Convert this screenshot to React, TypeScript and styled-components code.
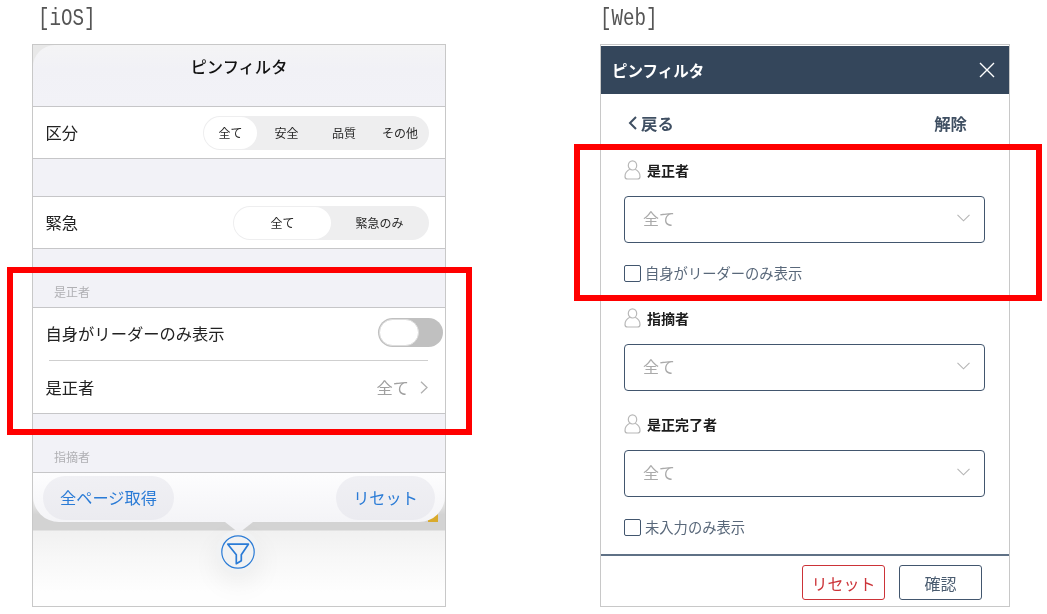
import styled, { createGlobalStyle } from 'styled-components';

const GlobalStyle = createGlobalStyle`
  html, body {
    margin: 0;
    background: #fff;
    font-family: "Noto Sans CJK JP", "Noto Sans", sans-serif;
  }
`;

const Page = styled.div`
  position: relative;
  width: 1047px;
  height: 614px;
  overflow: hidden;
  display: flex;
`;

const Column = styled.div<{ $left: number; $width: number }>`
  margin-left: ${(p) => p.$left}px;
  width: ${(p) => p.$width}px;
  display: flex;
  flex-direction: column;
`;

const Platform = styled.div<{ $indent: number }>`
  height: 44px;
  margin-left: ${(p) => p.$indent}px;
  font-family: "Liberation Mono", monospace;
  font-size: 24px;
  line-height: 37px;
  color: #555;
  transform: scaleX(0.8);
  transform-origin: left top;
  filter: blur(0.3px);
`;

const Frame = styled.div`
  height: 563px;
  box-sizing: border-box;
  border: 1px solid #c8c8c8;
  display: flex;
  flex-direction: column;
  overflow: hidden;
  background: #fff;
  filter: blur(0.35px);
`;

/* iOS */
const IosFrame = styled(Frame)`
  position: relative;
  background: #e8e8e8;
`;

const IosTitle = styled.div`
  height: 61px;
  box-sizing: border-box;
  padding-top: 8px;
  border-radius: 22px 0 0 0;
  background: linear-gradient(#f4f4f5, #f1f1f6 40%, #f2f2f7);
  text-align: center;
  font-size: 16.3px;
  font-weight: 500;
  line-height: 26px;
  color: #111;
`;

const IosGroup = styled.div`
  background: #fff;
  border-top: 1px solid #c6c6c8;
  border-bottom: 1px solid #c6c6c8;
`;

const IosRow = styled.div<{ $height?: number }>`
  height: ${(p) => p.$height ?? 51}px;
  box-sizing: border-box;
  padding: 0 16px 0 12.5px;
  display: flex;
  align-items: center;
  justify-content: space-between;
  font-size: 16.3px;
  color: #222;
`;

const IosLabel = styled.span`
  margin-top: -2px;
`;

const IosRule = styled.div`
  height: 1px;
  margin: 0 17px 0 16px;
  background: #cfcfcf;
`;

const IosSpacer = styled.div<{ $height: number }>`
  height: ${(p) => p.$height}px;
  box-sizing: border-box;
  padding: ${(p) => p.$height - 24}px 0 0 21px;
  background: #f2f2f7;
  font-size: 12px;
  line-height: 18px;
  color: #b0b0b4;
`;

const Segments = styled.div<{ $width: number }>`
  width: ${(p) => p.$width}px;
  height: 34px;
  box-sizing: border-box;
  padding: 1px;
  border-radius: 17px;
  background: #eeeeef;
  display: flex;
`;

const Segment = styled.div<{ $active?: boolean; $grow: number }>`
  flex: ${(p) => p.$grow} 0 0;
  display: flex;
  align-items: center;
  justify-content: center;
  border-radius: 16px;
  font-size: 12px;
  color: #2a2a2a;
  background: ${(p) => (p.$active ? '#fff' : 'transparent')};
`;

const Toggle = styled.div`
  width: 65px;
  height: 29px;
  margin: -3px -14px 0 0;
  box-sizing: border-box;
  padding: 1px;
  border-radius: 15px;
  background: #c0c0c0;
`;

const ToggleKnob = styled.div`
  width: 40px;
  height: 27px;
  box-sizing: border-box;
  border: 1px solid #ddd;
  border-radius: 14px;
  background: #fff;
`;

const IosValue = styled.span`
  display: flex;
  align-items: center;
  gap: 11px;
  margin-right: 1px;
  color: #a0a0a0;
`;

const IosDock = styled.div`
  position: relative;
  height: 49px;
  flex: none;
  border-top: 1px solid #c6c6c8;
  background: linear-gradient(#f6f6f6 40%, #d3d3d3 85%);
`;

const CornerMark = styled.div`
  position: absolute;
  right: 7px;
  bottom: 0;
  width: 10px;
  height: 12px;
  background: #d9aa2c;
`;

const IosToolbar = styled.div`
  position: relative;
  height: 49px;
  box-sizing: border-box;
  padding: 3px 10px 0;
  display: flex;
  justify-content: space-between;
  border-radius: 0 0 26px 26px;
  background: linear-gradient(#fdfdfe, #f4f4f7);
`;

const ToolButton = styled.div<{ $width: number }>`
  width: ${(p) => p.$width}px;
  height: 44px;
  box-sizing: border-box;
  padding-bottom: 2px;
  display: flex;
  align-items: center;
  justify-content: center;
  border-radius: 22px;
  background: linear-gradient(#f0f0f4, #ebebf0);
  font-size: 16.2px;
  color: #2a7bd6;
`;

const IosBackdrop = styled.div`
  flex: 1;
  background: linear-gradient(#d3d3d3 0, #d3d3d3 8px, #f1f1f1 9px, #f7f7f7 35px, #fefefe 70px);
`;

const FilterTail = styled.div`
  position: absolute;
  left: 192px;
  top: 477px;
  width: 0;
  height: 0;
  border-left: 14px solid transparent;
  border-right: 14px solid transparent;
  border-top: 11px solid #f3f3f6;
`;

const FilterButton = styled.div`
  position: absolute;
  left: 183px;
  top: 485px;
  width: 44px;
  height: 44px;
  border-radius: 50%;
  background: #f1f2f3;
  box-shadow: 0 10px 28px rgba(0, 0, 0, 0.06);
  display: flex;
  align-items: center;
  justify-content: center;
`;

/* Web */
const WebHeader = styled.div`
  height: 48px;
  margin: 1px 0 0;
  flex: none;
  box-sizing: border-box;
  padding: 0 14px 0 11px;
  display: flex;
  align-items: center;
  justify-content: space-between;
  background: #34465b;
  font-size: 15.5px;
  font-weight: 700;
  color: #fff;
`;

const WebBody = styled.div`
  flex: 1;
  padding: 0 24px 0 23px;
`;

const BackRow = styled.div`
  height: 66px;
  box-sizing: border-box;
  padding: 0 18px 9px 4px;
  display: flex;
  align-items: center;
  justify-content: space-between;
  font-size: 16.4px;
  font-weight: 700;
  color: #3f4f62;
`;

const BackLink = styled.span`
  display: flex;
  align-items: center;
  gap: 4px;
`;

const Section = styled.div<{ $gap?: number }>`
  margin-bottom: ${(p) => p.$gap ?? 23}px;
`;

const SectionHead = styled.div`
  height: 20px;
  margin-bottom: 16px;
  display: flex;
  align-items: center;
  gap: 6px;
  font-size: 14px;
  font-weight: 700;
  color: #1c1c1c;
`;

const Select = styled.div`
  height: 47px;
  box-sizing: border-box;
  padding: 0 14px 3px 18px;
  display: flex;
  align-items: center;
  justify-content: space-between;
  border: 1px solid #42566e;
  border-radius: 4px;
  font-size: 16px;
  color: #aaa;
`;

const CheckRow = styled.label`
  height: 17px;
  margin-top: 22px;
  display: flex;
  align-items: center;
  gap: 4px;
  font-size: 14.3px;
  color: #59687a;
`;

const CheckText = styled.span`
  margin-top: -3px;
`;

const CheckBox = styled.span`
  width: 17px;
  height: 17px;
  box-sizing: border-box;
  border: 1.5px solid #42566e;
  border-radius: 2px;
`;

const WebFooter = styled.div`
  height: 52px;
  flex: none;
  box-sizing: border-box;
  padding: 9px 27px 0 0;
  display: flex;
  justify-content: flex-end;
  gap: 14px;
  border-top: 2px solid #5f7186;
`;

const FooterButton = styled.div<{ $danger?: boolean }>`
  width: 83px;
  height: 35px;
  box-sizing: border-box;
  display: flex;
  align-items: center;
  justify-content: center;
  border: 1px solid ${(p) => (p.$danger ? '#cc3338' : '#42566e')};
  border-radius: 3px;
  font-size: 16px;
  color: ${(p) => (p.$danger ? '#cc3338' : '#4a5c70')};
`;

/* red annotations lie over the screenshots */
const Callout = styled.div`
  position: absolute;
  box-sizing: border-box;
  border: 6px solid #ff0000;
`;

const IosCallout = styled(Callout)`
  left: 7px;
  top: 267px;
  width: 465px;
  height: 168px;
`;

const WebCallout = styled(Callout)`
  left: 574px;
  top: 144px;
  width: 468px;
  height: 157px;
`;

const UserIcon = () => (
  <svg width="17" height="20" viewBox="0 0 17 20" fill="none" stroke="#b8b8b8" strokeWidth="1.2">
    <ellipse cx="8.5" cy="5.4" rx="4.2" ry="4.6" />
    <path d="M5.8 9.2C2.8 10.6 1 13.4 1 16.4 1 18 2 19 3.6 19h9.8c1.6 0 2.6-1 2.6-2.6 0-3-1.8-5.8-4.8-7.2" />
  </svg>
);

const FunnelIcon = () => (
  <svg width="34" height="34" viewBox="0 0 34 34" fill="none" stroke="#2a7bd6">
    <circle cx="17" cy="17" r="16.2" strokeWidth="1.2" />
    <path d="M6.8 9.2h20.6l-7.1 10.5v6l-5 3v-9z" strokeWidth="1.7" strokeLinejoin="round" />
  </svg>
);

const CloseIcon = () => (
  <svg width="16" height="16" viewBox="0 0 16 16" fill="none" stroke="#fff" strokeWidth="1.4">
    <path d="M1 1l14 14M15 1L1 15" />
  </svg>
);

const ChevronDown = () => (
  <svg width="13" height="8" viewBox="0 0 13 8" fill="none" stroke="#b5b5b5" strokeWidth="1.1">
    <path d="M.5.8l6 6 6-6" />
  </svg>
);

const ChevronRight = () => (
  <svg width="8" height="13" viewBox="0 0 8 13" fill="none" stroke="#b0b0b0" strokeWidth="1.3">
    <path d="M1 .8l6 5.7-6 5.7" />
  </svg>
);

const ChevronLeft = () => (
  <svg width="9" height="14" viewBox="0 0 9 14" fill="none" stroke="#3f4f62" strokeWidth="2">
    <path d="M8 1L2 7l6 6" />
  </svg>
);

const WebSection = ({ label }: { label: string }) => (
  <>
    <SectionHead>
      <UserIcon />
      {label}
    </SectionHead>
    <Select>
      全て
      <ChevronDown />
    </Select>
  </>
);

export default function App() {
  return (
    <Page>
      <GlobalStyle />
      <Column $left={32} $width={414}>
        <Platform $indent={6}>[iOS]</Platform>
        <IosFrame>
          <IosTitle>ピンフィルタ</IosTitle>
          <IosGroup>
            <IosRow>
              <IosLabel>区分</IosLabel>
              <Segments $width={226}>
                <Segment $active $grow={53}>全て</Segment>
                <Segment $grow={59}>安全</Segment>
                <Segment $grow={56}>品質</Segment>
                <Segment $grow={56}>その他</Segment>
              </Segments>
            </IosRow>
          </IosGroup>
          <IosSpacer $height={37} />
          <IosGroup>
            <IosRow>
              <IosLabel>緊急</IosLabel>
              <Segments $width={196}>
                <Segment $active $grow={1}>全て</Segment>
                <Segment $grow={1}>緊急のみ</Segment>
              </Segments>
            </IosRow>
          </IosGroup>
          <IosSpacer $height={58}>是正者</IosSpacer>
          <IosGroup>
            <IosRow $height={52}>
              <IosLabel>自身がリーダーのみ表示</IosLabel>
              <Toggle>
                <ToggleKnob />
              </Toggle>
            </IosRow>
            <IosRule />
            <IosRow $height={52}>
              <span>是正者</span>
              <IosValue>
                全て
                <ChevronRight />
              </IosValue>
            </IosRow>
          </IosGroup>
          <IosSpacer $height={58}>指摘者</IosSpacer>
          <IosDock>
            <CornerMark />
            <IosToolbar>
              <ToolButton $width={131}>全ページ取得</ToolButton>
              <ToolButton $width={99}>リセット</ToolButton>
            </IosToolbar>
          </IosDock>
          <IosBackdrop />
          <FilterTail />
          <FilterButton>
            <FunnelIcon />
          </FilterButton>
        </IosFrame>
      </Column>
      <Column $left={154} $width={410}>
        <Platform $indent={0}>[Web]</Platform>
        <Frame>
          <WebHeader>
            ピンフィルタ
            <CloseIcon />
          </WebHeader>
          <WebBody>
            <BackRow>
              <BackLink>
                <ChevronLeft />
                戻る
              </BackLink>
              解除
            </BackRow>
            <Section $gap={26}>
              <WebSection label="是正者" />
              <CheckRow>
                <CheckBox />
                <CheckText>自身がリーダーのみ表示</CheckText>
              </CheckRow>
            </Section>
            <Section>
              <WebSection label="指摘者" />
            </Section>
            <Section $gap={0}>
              <WebSection label="是正完了者" />
              <CheckRow>
                <CheckBox />
                <CheckText>未入力のみ表示</CheckText>
              </CheckRow>
            </Section>
          </WebBody>
          <WebFooter>
            <FooterButton $danger>リセット</FooterButton>
            <FooterButton>確認</FooterButton>
          </WebFooter>
        </Frame>
      </Column>
      <IosCallout />
      <WebCallout />
    </Page>
  );
}
